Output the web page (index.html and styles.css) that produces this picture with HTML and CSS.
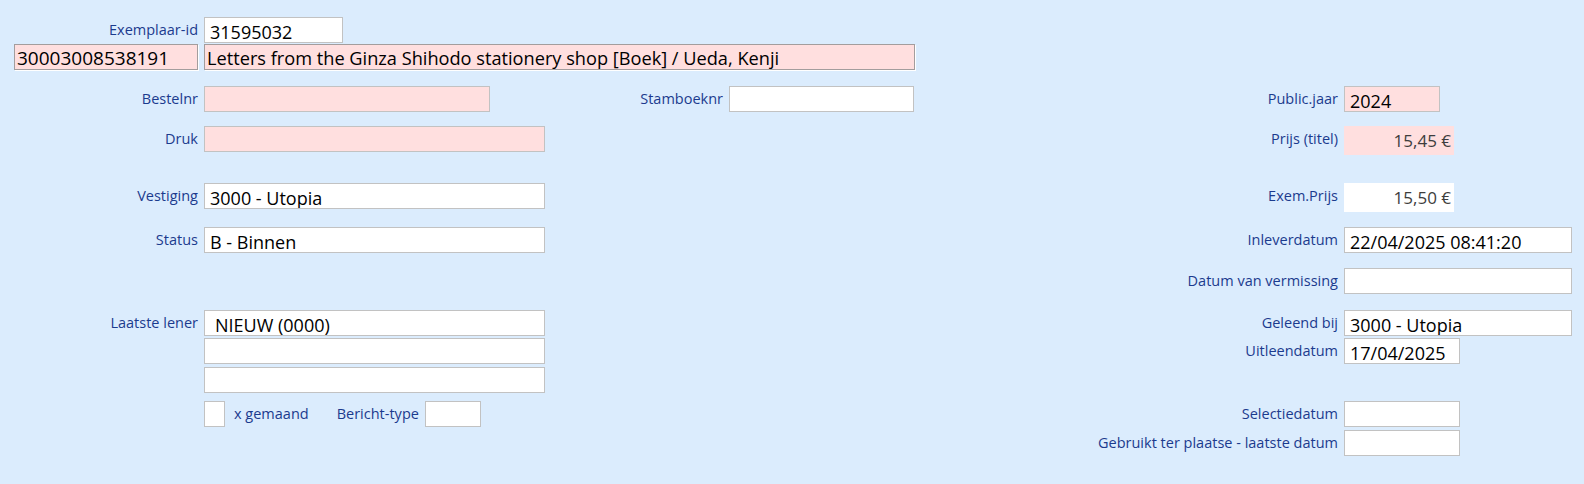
FILE: index.html
```html
<!DOCTYPE html>
<html lang="nl">

<head>
    <meta charset="UTF-8">
    <meta name="viewport" content="width=device-width, initial-scale=1.0">
    <title>Exemplaar - 31595032</title>
    <link rel="stylesheet" href="styles.css">
</head>

<body>
    <div class="record">
        <div class="head">
            <div class="lbl">Exemplaar-id</div>
            <div class="field w-id">31595032</div>
            <div class="field sunken barcode">30003008538191</div>
            <div class="field sunken title">Letters from the Ginza Shihodo stationery shop [Boek] / Ueda, Kenji</div>
        </div>

        <div class="grid">
            <div class="lbl">Bestelnr</div>
            <div class="field pink col-2 w-bestel"></div>
            <div class="lbl col-3">Stamboeknr</div>
            <div class="field col-4"></div>
            <div class="lbl col-5">Public.jaar</div>
            <div class="field pink col-6 w-year">2024</div>

            <div class="lbl">Druk</div>
            <div class="field pink col-2"></div>
            <div class="lbl col-5">Prijs (titel)</div>
            <div class="price pink col-6">15,45 €</div>

            <div class="lbl">Vestiging</div>
            <div class="field col-2">3000 - Utopia</div>
            <div class="lbl col-5">Exem.Prijs</div>
            <div class="price col-6">15,50 €</div>

            <div class="lbl">Status</div>
            <div class="field col-2">B - Binnen</div>
            <div class="lbl col-5">Inleverdatum</div>
            <div class="field col-6">22/04/2025 08:41:20</div>

            <div class="lbl col-5">Datum van vermissing</div>
            <div class="field col-6"></div>

            <div class="lbl">Laatste lener</div>
            <div class="field col-2 indent">NIEUW (0000)</div>
            <div class="lbl col-5">Geleend bij</div>
            <div class="field col-6">3000 - Utopia</div>

            <div class="field col-2"></div>
            <div class="lbl col-5">Uitleendatum</div>
            <div class="field col-6 w-date">17/04/2025</div>

            <div class="field col-2"></div>

            <div class="checks col-2">
                <div class="field w-check"></div>
                <div class="lbl gemaand">x gemaand</div>
                <div class="lbl">Bericht-type</div>
                <div class="field w-type"></div>
            </div>
            <div class="lbl col-5">Selectiedatum</div>
            <div class="field col-6 w-date"></div>

            <div class="lbl col-5">Gebruikt ter plaatse - laatste datum</div>
            <div class="field col-6 w-date"></div>
        </div>
    </div>
</body>

</html>
```

FILE: styles.css
```css
body {
    margin: 0;
    padding: 0;
    height: 100vh;
    background-color: #dbecfd;
    font-family: "Open Sans", "Noto Sans", sans-serif;
}

.record {
    padding-top: 17px;
}

.head {
    display: grid;
    grid-template-columns: 198px auto;
    grid-template-rows: 26px 27px;
    column-gap: 6px;
    row-gap: 1px;
    align-items: start;
}

.grid {
    display: grid;
    grid-template-columns: 198px 341px 172px 185px 418px 228px;
    grid-template-rows: 40px 57px 44px 41px 42px 28px 29px 34px 29px 26px;
    column-gap: 6px;
    margin-top: 15px;
    align-items: start;
}

.lbl {
    grid-column: 1;
    text-align: right;
    font-size: 14.5px;
    line-height: 21px;
    padding-top: 2px;
    color: #1b3b8e;
    white-space: nowrap;
}

/* grid columns, after .lbl so they win */
.col-2 { grid-column: 2; }
.col-3 { grid-column: 3; }
.col-4 { grid-column: 4; }
.col-5 { grid-column: 5; }
.col-6 { grid-column: 6; }

.field {
    box-sizing: border-box;
    height: 26px;
    padding: 3px 4px 0 5px;
    font-size: 18px;
    line-height: 22px;
    color: #000;
    background-color: #fff;
    border: 1px solid #c2c2c2;
    white-space: nowrap;
    overflow: hidden;
}

.field.pink,
.price.pink {
    background-color: #ffdfdf;
}

.field.sunken {
    padding-top: 2px;
    padding-left: 2px;
    font-size: 19px;
    background-color: #ffdfdf;
    border-color: #a39d9d;
    box-shadow: 1px 1px 0 #fff;
}

.barcode {
    grid-column: 1;
    margin-left: 14px;
}

.field.title {
    width: 711px;
    font-size: 18.2px;
}

.price {
    box-sizing: border-box;
    width: 110px;
    height: 29px;
    padding: 4px 3px 0 0;
    text-align: right;
    font-size: 17px;
    line-height: 22px;
    color: #3d3d3d;
    background-color: #fff;
}

.indent {
    padding-left: 10px;
}

.w-id { width: 139px; }
.w-bestel { width: 286px; }
.w-year { width: 96px; }
.w-date { width: 116px; }
.w-check { width: 21px; }
.w-type { width: 56px; }

.checks {
    display: flex;
    align-items: flex-start;
}

.checks .lbl {
    text-align: left;
}

.gemaand {
    margin-left: 9px;
    margin-right: 28px;
}

.checks .w-type {
    margin-left: 6px;
}
```
